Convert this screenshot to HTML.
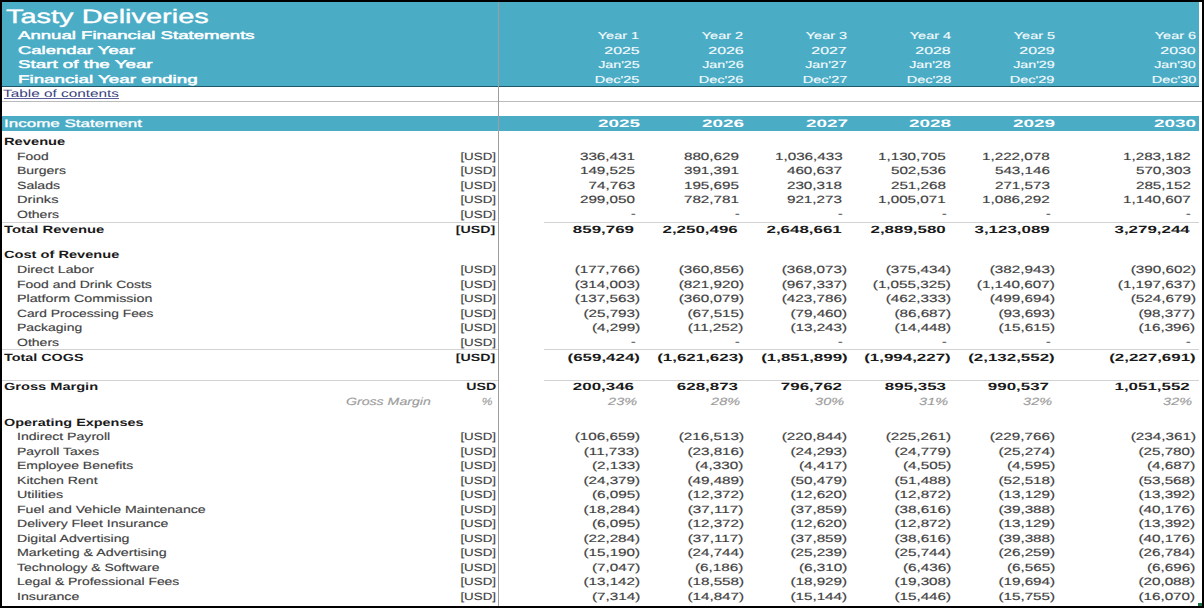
<!DOCTYPE html>
<html><head><meta charset="utf-8"><title>Tasty Deliveries</title>
<style>
html,body{margin:0;padding:0;background:#000;}
body{width:1204px;height:608px;position:relative;overflow:hidden;font-family:"Liberation Sans",sans-serif;}
#s{position:absolute;left:2px;top:2px;width:1200px;height:604px;background:#fff;overflow:hidden;}
.t{position:absolute;white-space:nowrap;line-height:1;text-rendering:geometricPrecision;}
.l{transform-origin:0 0;}
.rt{transform-origin:100% 0;}
.bx{position:absolute;}
.c_title{font-size:19.5px;font-weight:400;font-style:normal;color:#fff;-webkit-text-stroke:0.35px #fff;}
.c_hb{font-size:11.2px;font-weight:400;font-style:normal;color:#fff;-webkit-text-stroke:0.45px #fff;}
.c_hr{font-size:10.2px;font-weight:400;font-style:normal;color:#f4fbfd;-webkit-text-stroke:0.15px #f4fbfd;}
.c_bar{font-size:10.8px;font-weight:400;font-style:normal;color:#fff;-webkit-text-stroke:0.3px #fff;}
.c_barb{font-size:10.8px;font-weight:700;font-style:normal;color:#fff;}
.c_link{font-size:10.6px;font-weight:400;font-style:normal;color:#3b3f80;}
.c_r{font-size:10.5px;font-weight:400;font-style:normal;color:#414141;-webkit-text-stroke:0.15px #414141;}
.c_n{font-size:10.5px;font-weight:400;font-style:normal;color:#414141;-webkit-text-stroke:0.15px #414141;}
.c_b{font-size:10.5px;font-weight:700;font-style:normal;color:#1a1a1a;}
.c_nb{font-size:10.5px;font-weight:700;font-style:normal;color:#1a1a1a;}
.c_gi{font-size:10.5px;font-weight:400;font-style:italic;color:#9c9c9c;-webkit-text-stroke:0.15px #9c9c9c;}
.c_link{text-decoration:none;}
</style></head><body>
<div id="s">
<div class="bx" style="left:0px;top:0px;width:1197px;height:84.3px;background:#4BACC6"></div>
<div class="bx" style="left:0px;top:84px;width:1197px;height:1px;background:#1f5868"></div>
<div class="bx" style="left:0px;top:99px;width:1200px;height:1px;background:#bababa"></div>
<div class="bx" style="left:0px;top:113.6px;width:1197px;height:15px;background:#4BACC6"></div>
<div class="bx" style="left:496px;top:0px;width:1px;height:604px;background:#9e9e9e"></div>
<div class="bx" style="left:0px;top:219.7px;width:496px;height:1px;background:#d2d2d2"></div>
<div class="bx" style="left:542px;top:219.7px;width:655px;height:1px;background:#d2d2d2"></div>
<div class="bx" style="left:0px;top:347.3px;width:496px;height:1px;background:#d2d2d2"></div>
<div class="bx" style="left:542px;top:347.3px;width:655px;height:1px;background:#d2d2d2"></div>
<div class="bx" style="left:0px;top:377.5px;width:496px;height:1px;background:#d2d2d2"></div>
<div class="bx" style="left:542px;top:377.5px;width:655px;height:1px;background:#d2d2d2"></div>
<div class="bx" style="left:2px;top:96px;width:115px;height:1px;background:#5a5e98"></div>
<div class="bx" style="left:1195.5px;top:601px;width:4.5px;height:3px;background:#1e7145"></div>
<div class="t l c_title" style="left:3.50px;top:6px;transform:scaleX(1.4852)">Tasty Deliveries</div>
<div class="t l c_hb" style="left:15.70px;top:29px;transform:scaleX(1.6613)">Annual Financial Statements</div>
<div class="t l c_hb" style="left:15.70px;top:44px;transform:scaleX(1.6511)">Calendar Year</div>
<div class="t l c_hb" style="left:15.70px;top:58px;transform:scaleX(1.6776)">Start of the Year</div>
<div class="t l c_hb" style="left:15.70px;top:73px;transform:scaleX(1.6785)">Financial Year ending</div>
<div class="t rt c_hr" style="right:562.50px;top:30px;transform:scaleX(1.4195)">Year 1</div>
<div class="t rt c_hr" style="right:562.50px;top:45px;transform:scaleX(1.5570)">2025</div>
<div class="t rt c_hr" style="right:562.50px;top:59px;transform:scaleX(1.3972)">Jan&#39;25</div>
<div class="t rt c_hr" style="right:562.50px;top:74px;transform:scaleX(1.4233)">Dec&#39;25</div>
<div class="t rt c_barb" style="right:562.00px;top:117px;transform:scaleX(1.7519)">2025</div>
<div class="t rt c_hr" style="right:458.70px;top:30px;transform:scaleX(1.4195)">Year 2</div>
<div class="t rt c_hr" style="right:458.70px;top:45px;transform:scaleX(1.5570)">2026</div>
<div class="t rt c_hr" style="right:458.70px;top:59px;transform:scaleX(1.3972)">Jan&#39;26</div>
<div class="t rt c_hr" style="right:458.70px;top:74px;transform:scaleX(1.4233)">Dec&#39;26</div>
<div class="t rt c_barb" style="right:458.20px;top:117px;transform:scaleX(1.7519)">2026</div>
<div class="t rt c_hr" style="right:354.90px;top:30px;transform:scaleX(1.4195)">Year 3</div>
<div class="t rt c_hr" style="right:354.90px;top:45px;transform:scaleX(1.5570)">2027</div>
<div class="t rt c_hr" style="right:354.90px;top:59px;transform:scaleX(1.3972)">Jan&#39;27</div>
<div class="t rt c_hr" style="right:354.90px;top:74px;transform:scaleX(1.4233)">Dec&#39;27</div>
<div class="t rt c_barb" style="right:354.40px;top:117px;transform:scaleX(1.7519)">2027</div>
<div class="t rt c_hr" style="right:251.10px;top:30px;transform:scaleX(1.4195)">Year 4</div>
<div class="t rt c_hr" style="right:251.10px;top:45px;transform:scaleX(1.5570)">2028</div>
<div class="t rt c_hr" style="right:251.10px;top:59px;transform:scaleX(1.3972)">Jan&#39;28</div>
<div class="t rt c_hr" style="right:251.10px;top:74px;transform:scaleX(1.4233)">Dec&#39;28</div>
<div class="t rt c_barb" style="right:250.60px;top:117px;transform:scaleX(1.7519)">2028</div>
<div class="t rt c_hr" style="right:147.30px;top:30px;transform:scaleX(1.4195)">Year 5</div>
<div class="t rt c_hr" style="right:147.30px;top:45px;transform:scaleX(1.5570)">2029</div>
<div class="t rt c_hr" style="right:147.30px;top:59px;transform:scaleX(1.3972)">Jan&#39;29</div>
<div class="t rt c_hr" style="right:147.30px;top:74px;transform:scaleX(1.4233)">Dec&#39;29</div>
<div class="t rt c_barb" style="right:146.80px;top:117px;transform:scaleX(1.7519)">2029</div>
<div class="t rt c_hr" style="right:6.10px;top:30px;transform:scaleX(1.4195)">Year 6</div>
<div class="t rt c_hr" style="right:6.10px;top:45px;transform:scaleX(1.5570)">2030</div>
<div class="t rt c_hr" style="right:6.10px;top:59px;transform:scaleX(1.3972)">Jan&#39;30</div>
<div class="t rt c_hr" style="right:6.10px;top:74px;transform:scaleX(1.4233)">Dec&#39;30</div>
<div class="t rt c_barb" style="right:5.60px;top:117px;transform:scaleX(1.7519)">2030</div>
<div class="t l c_link" style="left:1.30px;top:87px;transform:scaleX(1.4480)">Table of contents</div>
<div class="t l c_bar" style="left:2.30px;top:117px;transform:scaleX(1.5749)">Income Statement</div>
<div class="t l c_b" style="left:2.00px;top:135px;transform:scaleX(1.4001)">Revenue</div>
<div class="t l c_r" style="left:14.70px;top:150px;transform:scaleX(1.3201)">Food</div>
<div class="t rt c_r" style="right:705.90px;top:150px;transform:scaleX(1.2707)">[USD]</div>
<div class="t rt c_n" style="right:567.20px;top:150px;transform:scaleX(1.4500)">336,431</div>
<div class="t rt c_n" style="right:463.40px;top:150px;transform:scaleX(1.4500)">880,629</div>
<div class="t rt c_n" style="right:359.60px;top:150px;transform:scaleX(1.4500)">1,036,433</div>
<div class="t rt c_n" style="right:255.80px;top:150px;transform:scaleX(1.4500)">1,130,705</div>
<div class="t rt c_n" style="right:152.00px;top:150px;transform:scaleX(1.4500)">1,222,078</div>
<div class="t rt c_n" style="right:11.50px;top:150px;transform:scaleX(1.4500)">1,283,182</div>
<div class="t l c_r" style="left:14.70px;top:164px;transform:scaleX(1.3328)">Burgers</div>
<div class="t rt c_r" style="right:705.90px;top:164px;transform:scaleX(1.2707)">[USD]</div>
<div class="t rt c_n" style="right:567.20px;top:164px;transform:scaleX(1.4500)">149,525</div>
<div class="t rt c_n" style="right:463.40px;top:164px;transform:scaleX(1.4500)">391,391</div>
<div class="t rt c_n" style="right:359.60px;top:164px;transform:scaleX(1.4500)">460,637</div>
<div class="t rt c_n" style="right:255.80px;top:164px;transform:scaleX(1.4500)">502,536</div>
<div class="t rt c_n" style="right:152.00px;top:164px;transform:scaleX(1.4500)">543,146</div>
<div class="t rt c_n" style="right:11.50px;top:164px;transform:scaleX(1.4500)">570,303</div>
<div class="t l c_r" style="left:14.70px;top:179px;transform:scaleX(1.3423)">Salads</div>
<div class="t rt c_r" style="right:705.90px;top:179px;transform:scaleX(1.2707)">[USD]</div>
<div class="t rt c_n" style="right:567.20px;top:179px;transform:scaleX(1.4500)">74,763</div>
<div class="t rt c_n" style="right:463.40px;top:179px;transform:scaleX(1.4500)">195,695</div>
<div class="t rt c_n" style="right:359.60px;top:179px;transform:scaleX(1.4500)">230,318</div>
<div class="t rt c_n" style="right:255.80px;top:179px;transform:scaleX(1.4500)">251,268</div>
<div class="t rt c_n" style="right:152.00px;top:179px;transform:scaleX(1.4500)">271,573</div>
<div class="t rt c_n" style="right:11.50px;top:179px;transform:scaleX(1.4500)">285,152</div>
<div class="t l c_r" style="left:14.70px;top:193px;transform:scaleX(1.3942)">Drinks</div>
<div class="t rt c_r" style="right:705.90px;top:193px;transform:scaleX(1.2707)">[USD]</div>
<div class="t rt c_n" style="right:567.20px;top:193px;transform:scaleX(1.4500)">299,050</div>
<div class="t rt c_n" style="right:463.40px;top:193px;transform:scaleX(1.4500)">782,781</div>
<div class="t rt c_n" style="right:359.60px;top:193px;transform:scaleX(1.4500)">921,273</div>
<div class="t rt c_n" style="right:255.80px;top:193px;transform:scaleX(1.4500)">1,005,071</div>
<div class="t rt c_n" style="right:152.00px;top:193px;transform:scaleX(1.4500)">1,086,292</div>
<div class="t rt c_n" style="right:11.50px;top:193px;transform:scaleX(1.4500)">1,140,607</div>
<div class="t l c_r" style="left:14.70px;top:208px;transform:scaleX(1.3358)">Others</div>
<div class="t rt c_r" style="right:705.90px;top:208px;transform:scaleX(1.2707)">[USD]</div>
<div class="t rt c_r" style="right:566.80px;top:207px;transform:scaleX(1.3200)">-</div>
<div class="t rt c_r" style="right:463.00px;top:207px;transform:scaleX(1.3200)">-</div>
<div class="t rt c_r" style="right:359.20px;top:207px;transform:scaleX(1.3200)">-</div>
<div class="t rt c_r" style="right:255.40px;top:207px;transform:scaleX(1.3200)">-</div>
<div class="t rt c_r" style="right:151.60px;top:207px;transform:scaleX(1.3200)">-</div>
<div class="t rt c_r" style="right:11.10px;top:207px;transform:scaleX(1.3200)">-</div>
<div class="t l c_b" style="left:2.00px;top:223px;transform:scaleX(1.4127)">Total Revenue</div>
<div class="t rt c_b" style="right:706.50px;top:223px;transform:scaleX(1.3500)">[USD]</div>
<div class="t rt c_nb" style="right:567.90px;top:223px;transform:scaleX(1.6100)">859,769</div>
<div class="t rt c_nb" style="right:464.10px;top:223px;transform:scaleX(1.6100)">2,250,496</div>
<div class="t rt c_nb" style="right:360.30px;top:223px;transform:scaleX(1.6100)">2,648,661</div>
<div class="t rt c_nb" style="right:256.50px;top:223px;transform:scaleX(1.6100)">2,889,580</div>
<div class="t rt c_nb" style="right:152.70px;top:223px;transform:scaleX(1.6100)">3,123,089</div>
<div class="t rt c_nb" style="right:12.20px;top:223px;transform:scaleX(1.6100)">3,279,244</div>
<div class="t l c_b" style="left:2.00px;top:248px;transform:scaleX(1.3915)">Cost of Revenue</div>
<div class="t l c_r" style="left:14.70px;top:263px;transform:scaleX(1.3461)">Direct Labor</div>
<div class="t rt c_r" style="right:705.90px;top:263px;transform:scaleX(1.2707)">[USD]</div>
<div class="t rt c_n" style="right:562.20px;top:263px;transform:scaleX(1.4500)">(177,766)</div>
<div class="t rt c_n" style="right:458.40px;top:263px;transform:scaleX(1.4500)">(360,856)</div>
<div class="t rt c_n" style="right:354.60px;top:263px;transform:scaleX(1.4500)">(368,073)</div>
<div class="t rt c_n" style="right:250.80px;top:263px;transform:scaleX(1.4500)">(375,434)</div>
<div class="t rt c_n" style="right:147.00px;top:263px;transform:scaleX(1.4500)">(382,943)</div>
<div class="t rt c_n" style="right:6.50px;top:263px;transform:scaleX(1.4500)">(390,602)</div>
<div class="t l c_r" style="left:14.70px;top:278px;transform:scaleX(1.3275)">Food and Drink Costs</div>
<div class="t rt c_r" style="right:705.90px;top:278px;transform:scaleX(1.2707)">[USD]</div>
<div class="t rt c_n" style="right:562.20px;top:278px;transform:scaleX(1.4500)">(314,003)</div>
<div class="t rt c_n" style="right:458.40px;top:278px;transform:scaleX(1.4500)">(821,920)</div>
<div class="t rt c_n" style="right:354.60px;top:278px;transform:scaleX(1.4500)">(967,337)</div>
<div class="t rt c_n" style="right:250.80px;top:278px;transform:scaleX(1.4500)">(1,055,325)</div>
<div class="t rt c_n" style="right:147.00px;top:278px;transform:scaleX(1.4500)">(1,140,607)</div>
<div class="t rt c_n" style="right:6.50px;top:278px;transform:scaleX(1.4500)">(1,197,637)</div>
<div class="t l c_r" style="left:14.70px;top:292px;transform:scaleX(1.3570)">Platform Commission</div>
<div class="t rt c_r" style="right:705.90px;top:292px;transform:scaleX(1.2707)">[USD]</div>
<div class="t rt c_n" style="right:562.20px;top:292px;transform:scaleX(1.4500)">(137,563)</div>
<div class="t rt c_n" style="right:458.40px;top:292px;transform:scaleX(1.4500)">(360,079)</div>
<div class="t rt c_n" style="right:354.60px;top:292px;transform:scaleX(1.4500)">(423,786)</div>
<div class="t rt c_n" style="right:250.80px;top:292px;transform:scaleX(1.4500)">(462,333)</div>
<div class="t rt c_n" style="right:147.00px;top:292px;transform:scaleX(1.4500)">(499,694)</div>
<div class="t rt c_n" style="right:6.50px;top:292px;transform:scaleX(1.4500)">(524,679)</div>
<div class="t l c_r" style="left:14.70px;top:307px;transform:scaleX(1.3129)">Card Processing Fees</div>
<div class="t rt c_r" style="right:705.90px;top:307px;transform:scaleX(1.2707)">[USD]</div>
<div class="t rt c_n" style="right:562.20px;top:307px;transform:scaleX(1.4500)">(25,793)</div>
<div class="t rt c_n" style="right:458.40px;top:307px;transform:scaleX(1.4500)">(67,515)</div>
<div class="t rt c_n" style="right:354.60px;top:307px;transform:scaleX(1.4500)">(79,460)</div>
<div class="t rt c_n" style="right:250.80px;top:307px;transform:scaleX(1.4500)">(86,687)</div>
<div class="t rt c_n" style="right:147.00px;top:307px;transform:scaleX(1.4500)">(93,693)</div>
<div class="t rt c_n" style="right:6.50px;top:307px;transform:scaleX(1.4500)">(98,377)</div>
<div class="t l c_r" style="left:14.70px;top:321px;transform:scaleX(1.3293)">Packaging</div>
<div class="t rt c_r" style="right:705.90px;top:321px;transform:scaleX(1.2707)">[USD]</div>
<div class="t rt c_n" style="right:562.20px;top:321px;transform:scaleX(1.4500)">(4,299)</div>
<div class="t rt c_n" style="right:458.40px;top:321px;transform:scaleX(1.4500)">(11,252)</div>
<div class="t rt c_n" style="right:354.60px;top:321px;transform:scaleX(1.4500)">(13,243)</div>
<div class="t rt c_n" style="right:250.80px;top:321px;transform:scaleX(1.4500)">(14,448)</div>
<div class="t rt c_n" style="right:147.00px;top:321px;transform:scaleX(1.4500)">(15,615)</div>
<div class="t rt c_n" style="right:6.50px;top:321px;transform:scaleX(1.4500)">(16,396)</div>
<div class="t l c_r" style="left:14.70px;top:336px;transform:scaleX(1.3358)">Others</div>
<div class="t rt c_r" style="right:705.90px;top:336px;transform:scaleX(1.2707)">[USD]</div>
<div class="t rt c_r" style="right:566.80px;top:335px;transform:scaleX(1.3200)">-</div>
<div class="t rt c_r" style="right:463.00px;top:335px;transform:scaleX(1.3200)">-</div>
<div class="t rt c_r" style="right:359.20px;top:335px;transform:scaleX(1.3200)">-</div>
<div class="t rt c_r" style="right:255.40px;top:335px;transform:scaleX(1.3200)">-</div>
<div class="t rt c_r" style="right:151.60px;top:335px;transform:scaleX(1.3200)">-</div>
<div class="t rt c_r" style="right:11.10px;top:335px;transform:scaleX(1.3200)">-</div>
<div class="t l c_b" style="left:2.00px;top:351px;transform:scaleX(1.3674)">Total COGS</div>
<div class="t rt c_b" style="right:706.50px;top:351px;transform:scaleX(1.3500)">[USD]</div>
<div class="t rt c_nb" style="right:562.20px;top:351px;transform:scaleX(1.6100)">(659,424)</div>
<div class="t rt c_nb" style="right:458.40px;top:351px;transform:scaleX(1.6100)">(1,621,623)</div>
<div class="t rt c_nb" style="right:354.60px;top:351px;transform:scaleX(1.6100)">(1,851,899)</div>
<div class="t rt c_nb" style="right:250.80px;top:351px;transform:scaleX(1.6100)">(1,994,227)</div>
<div class="t rt c_nb" style="right:147.00px;top:351px;transform:scaleX(1.6100)">(2,132,552)</div>
<div class="t rt c_nb" style="right:6.50px;top:351px;transform:scaleX(1.6100)">(2,227,691)</div>
<div class="t l c_b" style="left:2.00px;top:380px;transform:scaleX(1.3902)">Gross Margin</div>
<div class="t rt c_b" style="right:706.00px;top:380px;transform:scaleX(1.3500)">USD</div>
<div class="t rt c_nb" style="right:567.90px;top:380px;transform:scaleX(1.6100)">200,346</div>
<div class="t rt c_nb" style="right:464.10px;top:380px;transform:scaleX(1.6100)">628,873</div>
<div class="t rt c_nb" style="right:360.30px;top:380px;transform:scaleX(1.6100)">796,762</div>
<div class="t rt c_nb" style="right:256.50px;top:380px;transform:scaleX(1.6100)">895,353</div>
<div class="t rt c_nb" style="right:152.70px;top:380px;transform:scaleX(1.6100)">990,537</div>
<div class="t rt c_nb" style="right:12.20px;top:380px;transform:scaleX(1.6100)">1,051,552</div>
<div class="t l c_gi" style="left:343.90px;top:395px;transform:scaleX(1.3457)">Gross Margin</div>
<div class="t rt c_gi" style="right:709.20px;top:395px;transform:scaleX(1.1452)">%</div>
<div class="t rt c_gi" style="right:565.40px;top:395px;transform:scaleX(1.3752)">23%</div>
<div class="t rt c_gi" style="right:461.60px;top:395px;transform:scaleX(1.3752)">28%</div>
<div class="t rt c_gi" style="right:357.80px;top:395px;transform:scaleX(1.3752)">30%</div>
<div class="t rt c_gi" style="right:254.00px;top:395px;transform:scaleX(1.3752)">31%</div>
<div class="t rt c_gi" style="right:150.20px;top:395px;transform:scaleX(1.3752)">32%</div>
<div class="t rt c_gi" style="right:9.70px;top:395px;transform:scaleX(1.3752)">32%</div>
<div class="t l c_b" style="left:2.00px;top:416px;transform:scaleX(1.3737)">Operating Expenses</div>
<div class="t l c_r" style="left:14.70px;top:430px;transform:scaleX(1.3419)">Indirect Payroll</div>
<div class="t rt c_r" style="right:705.90px;top:430px;transform:scaleX(1.2707)">[USD]</div>
<div class="t rt c_n" style="right:562.20px;top:430px;transform:scaleX(1.4500)">(106,659)</div>
<div class="t rt c_n" style="right:458.40px;top:430px;transform:scaleX(1.4500)">(216,513)</div>
<div class="t rt c_n" style="right:354.60px;top:430px;transform:scaleX(1.4500)">(220,844)</div>
<div class="t rt c_n" style="right:250.80px;top:430px;transform:scaleX(1.4500)">(225,261)</div>
<div class="t rt c_n" style="right:147.00px;top:430px;transform:scaleX(1.4500)">(229,766)</div>
<div class="t rt c_n" style="right:6.50px;top:430px;transform:scaleX(1.4500)">(234,361)</div>
<div class="t l c_r" style="left:14.70px;top:445px;transform:scaleX(1.3202)">Payroll Taxes</div>
<div class="t rt c_r" style="right:705.90px;top:445px;transform:scaleX(1.2707)">[USD]</div>
<div class="t rt c_n" style="right:562.20px;top:445px;transform:scaleX(1.4500)">(11,733)</div>
<div class="t rt c_n" style="right:458.40px;top:445px;transform:scaleX(1.4500)">(23,816)</div>
<div class="t rt c_n" style="right:354.60px;top:445px;transform:scaleX(1.4500)">(24,293)</div>
<div class="t rt c_n" style="right:250.80px;top:445px;transform:scaleX(1.4500)">(24,779)</div>
<div class="t rt c_n" style="right:147.00px;top:445px;transform:scaleX(1.4500)">(25,274)</div>
<div class="t rt c_n" style="right:6.50px;top:445px;transform:scaleX(1.4500)">(25,780)</div>
<div class="t l c_r" style="left:14.70px;top:459px;transform:scaleX(1.3271)">Employee Benefits</div>
<div class="t rt c_r" style="right:705.90px;top:459px;transform:scaleX(1.2707)">[USD]</div>
<div class="t rt c_n" style="right:562.20px;top:459px;transform:scaleX(1.4500)">(2,133)</div>
<div class="t rt c_n" style="right:458.40px;top:459px;transform:scaleX(1.4500)">(4,330)</div>
<div class="t rt c_n" style="right:354.60px;top:459px;transform:scaleX(1.4500)">(4,417)</div>
<div class="t rt c_n" style="right:250.80px;top:459px;transform:scaleX(1.4500)">(4,505)</div>
<div class="t rt c_n" style="right:147.00px;top:459px;transform:scaleX(1.4500)">(4,595)</div>
<div class="t rt c_n" style="right:6.50px;top:459px;transform:scaleX(1.4500)">(4,687)</div>
<div class="t l c_r" style="left:14.70px;top:474px;transform:scaleX(1.3405)">Kitchen Rent</div>
<div class="t rt c_r" style="right:705.90px;top:474px;transform:scaleX(1.2707)">[USD]</div>
<div class="t rt c_n" style="right:562.20px;top:474px;transform:scaleX(1.4500)">(24,379)</div>
<div class="t rt c_n" style="right:458.40px;top:474px;transform:scaleX(1.4500)">(49,489)</div>
<div class="t rt c_n" style="right:354.60px;top:474px;transform:scaleX(1.4500)">(50,479)</div>
<div class="t rt c_n" style="right:250.80px;top:474px;transform:scaleX(1.4500)">(51,488)</div>
<div class="t rt c_n" style="right:147.00px;top:474px;transform:scaleX(1.4500)">(52,518)</div>
<div class="t rt c_n" style="right:6.50px;top:474px;transform:scaleX(1.4500)">(53,568)</div>
<div class="t l c_r" style="left:14.70px;top:488px;transform:scaleX(1.3621)">Utilities</div>
<div class="t rt c_r" style="right:705.90px;top:488px;transform:scaleX(1.2707)">[USD]</div>
<div class="t rt c_n" style="right:562.20px;top:488px;transform:scaleX(1.4500)">(6,095)</div>
<div class="t rt c_n" style="right:458.40px;top:488px;transform:scaleX(1.4500)">(12,372)</div>
<div class="t rt c_n" style="right:354.60px;top:488px;transform:scaleX(1.4500)">(12,620)</div>
<div class="t rt c_n" style="right:250.80px;top:488px;transform:scaleX(1.4500)">(12,872)</div>
<div class="t rt c_n" style="right:147.00px;top:488px;transform:scaleX(1.4500)">(13,129)</div>
<div class="t rt c_n" style="right:6.50px;top:488px;transform:scaleX(1.4500)">(13,392)</div>
<div class="t l c_r" style="left:14.70px;top:503px;transform:scaleX(1.3406)">Fuel and Vehicle Maintenance</div>
<div class="t rt c_r" style="right:705.90px;top:503px;transform:scaleX(1.2707)">[USD]</div>
<div class="t rt c_n" style="right:562.20px;top:503px;transform:scaleX(1.4500)">(18,284)</div>
<div class="t rt c_n" style="right:458.40px;top:503px;transform:scaleX(1.4500)">(37,117)</div>
<div class="t rt c_n" style="right:354.60px;top:503px;transform:scaleX(1.4500)">(37,859)</div>
<div class="t rt c_n" style="right:250.80px;top:503px;transform:scaleX(1.4500)">(38,616)</div>
<div class="t rt c_n" style="right:147.00px;top:503px;transform:scaleX(1.4500)">(39,388)</div>
<div class="t rt c_n" style="right:6.50px;top:503px;transform:scaleX(1.4500)">(40,176)</div>
<div class="t l c_r" style="left:14.70px;top:517px;transform:scaleX(1.3372)">Delivery Fleet Insurance</div>
<div class="t rt c_r" style="right:705.90px;top:517px;transform:scaleX(1.2707)">[USD]</div>
<div class="t rt c_n" style="right:562.20px;top:517px;transform:scaleX(1.4500)">(6,095)</div>
<div class="t rt c_n" style="right:458.40px;top:517px;transform:scaleX(1.4500)">(12,372)</div>
<div class="t rt c_n" style="right:354.60px;top:517px;transform:scaleX(1.4500)">(12,620)</div>
<div class="t rt c_n" style="right:250.80px;top:517px;transform:scaleX(1.4500)">(12,872)</div>
<div class="t rt c_n" style="right:147.00px;top:517px;transform:scaleX(1.4500)">(13,129)</div>
<div class="t rt c_n" style="right:6.50px;top:517px;transform:scaleX(1.4500)">(13,392)</div>
<div class="t l c_r" style="left:14.70px;top:532px;transform:scaleX(1.3478)">Digital Advertising</div>
<div class="t rt c_r" style="right:705.90px;top:532px;transform:scaleX(1.2707)">[USD]</div>
<div class="t rt c_n" style="right:562.20px;top:532px;transform:scaleX(1.4500)">(22,284)</div>
<div class="t rt c_n" style="right:458.40px;top:532px;transform:scaleX(1.4500)">(37,117)</div>
<div class="t rt c_n" style="right:354.60px;top:532px;transform:scaleX(1.4500)">(37,859)</div>
<div class="t rt c_n" style="right:250.80px;top:532px;transform:scaleX(1.4500)">(38,616)</div>
<div class="t rt c_n" style="right:147.00px;top:532px;transform:scaleX(1.4500)">(39,388)</div>
<div class="t rt c_n" style="right:6.50px;top:532px;transform:scaleX(1.4500)">(40,176)</div>
<div class="t l c_r" style="left:14.70px;top:546px;transform:scaleX(1.3571)">Marketing &amp; Advertising</div>
<div class="t rt c_r" style="right:705.90px;top:546px;transform:scaleX(1.2707)">[USD]</div>
<div class="t rt c_n" style="right:562.20px;top:546px;transform:scaleX(1.4500)">(15,190)</div>
<div class="t rt c_n" style="right:458.40px;top:546px;transform:scaleX(1.4500)">(24,744)</div>
<div class="t rt c_n" style="right:354.60px;top:546px;transform:scaleX(1.4500)">(25,239)</div>
<div class="t rt c_n" style="right:250.80px;top:546px;transform:scaleX(1.4500)">(25,744)</div>
<div class="t rt c_n" style="right:147.00px;top:546px;transform:scaleX(1.4500)">(26,259)</div>
<div class="t rt c_n" style="right:6.50px;top:546px;transform:scaleX(1.4500)">(26,784)</div>
<div class="t l c_r" style="left:14.70px;top:561px;transform:scaleX(1.3258)">Technology &amp; Software</div>
<div class="t rt c_r" style="right:705.90px;top:561px;transform:scaleX(1.2707)">[USD]</div>
<div class="t rt c_n" style="right:562.20px;top:561px;transform:scaleX(1.4500)">(7,047)</div>
<div class="t rt c_n" style="right:458.40px;top:561px;transform:scaleX(1.4500)">(6,186)</div>
<div class="t rt c_n" style="right:354.60px;top:561px;transform:scaleX(1.4500)">(6,310)</div>
<div class="t rt c_n" style="right:250.80px;top:561px;transform:scaleX(1.4500)">(6,436)</div>
<div class="t rt c_n" style="right:147.00px;top:561px;transform:scaleX(1.4500)">(6,565)</div>
<div class="t rt c_n" style="right:6.50px;top:561px;transform:scaleX(1.4500)">(6,696)</div>
<div class="t l c_r" style="left:14.70px;top:575px;transform:scaleX(1.3241)">Legal &amp; Professional Fees</div>
<div class="t rt c_r" style="right:705.90px;top:575px;transform:scaleX(1.2707)">[USD]</div>
<div class="t rt c_n" style="right:562.20px;top:575px;transform:scaleX(1.4500)">(13,142)</div>
<div class="t rt c_n" style="right:458.40px;top:575px;transform:scaleX(1.4500)">(18,558)</div>
<div class="t rt c_n" style="right:354.60px;top:575px;transform:scaleX(1.4500)">(18,929)</div>
<div class="t rt c_n" style="right:250.80px;top:575px;transform:scaleX(1.4500)">(19,308)</div>
<div class="t rt c_n" style="right:147.00px;top:575px;transform:scaleX(1.4500)">(19,694)</div>
<div class="t rt c_n" style="right:6.50px;top:575px;transform:scaleX(1.4500)">(20,088)</div>
<div class="t l c_r" style="left:14.70px;top:590px;transform:scaleX(1.3507)">Insurance</div>
<div class="t rt c_r" style="right:705.90px;top:590px;transform:scaleX(1.2707)">[USD]</div>
<div class="t rt c_n" style="right:562.20px;top:590px;transform:scaleX(1.4500)">(7,314)</div>
<div class="t rt c_n" style="right:458.40px;top:590px;transform:scaleX(1.4500)">(14,847)</div>
<div class="t rt c_n" style="right:354.60px;top:590px;transform:scaleX(1.4500)">(15,144)</div>
<div class="t rt c_n" style="right:250.80px;top:590px;transform:scaleX(1.4500)">(15,446)</div>
<div class="t rt c_n" style="right:147.00px;top:590px;transform:scaleX(1.4500)">(15,755)</div>
<div class="t rt c_n" style="right:6.50px;top:590px;transform:scaleX(1.4500)">(16,070)</div>
</div>
</body></html>
